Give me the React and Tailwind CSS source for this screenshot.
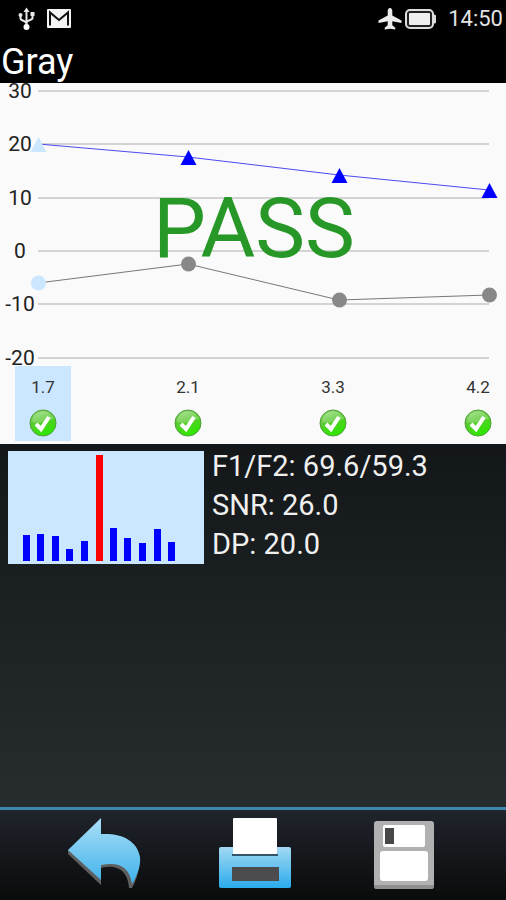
const GRID = [
  { label: '30', y: 8 },
  { label: '20', y: 61 },
  { label: '10', y: 115 },
  { label: '0', y: 168 },
  { label: '-10', y: 221 },
  { label: '-20', y: 275 },
];

const F1 = [
  { x: 38, y: 61 },
  { x: 188, y: 74 },
  { x: 339, y: 92 },
  { x: 489, y: 107 },
];

const NOISE = [
  { x: 38, y: 200 },
  { x: 188, y: 181 },
  { x: 339, y: 217 },
  { x: 489, y: 212 },
];

const FREQUENCIES = ['1.7', '2.1', '3.3', '4.2'];

const SPECTRUM = [
  { x: 15, h: 26 },
  { x: 29, h: 27 },
  { x: 44, h: 25 },
  { x: 58, h: 12 },
  { x: 73, h: 20 },
  { x: 88, h: 106, peak: true },
  { x: 102, h: 33 },
  { x: 116, h: 23 },
  { x: 131, h: 18 },
  { x: 146, h: 32 },
  { x: 160, h: 19 },
];

const toPoints = (list) => list.map((p) => `${p.x},${p.y}`).join(' ');

const UsbIcon = () => (
  <svg width="17" height="24" viewBox="0 0 17 24" fill="none" stroke="#e8e8e8" strokeWidth="2">
    <path d="M8.5 3v18" />
    <path d="M2.5 8v3.5c0 2.5 6 2 6 5" />
    <path d="M14.5 7v4c0 2.5-6 2-6 4.5" />
    <path d="M8.5 0.5l3 4.5h-6z" fill="#e8e8e8" stroke="none" />
    <circle cx="2.5" cy="8" r="2" fill="#e8e8e8" stroke="none" />
    <path d="M12.5 5h4v4h-4z" fill="#e8e8e8" stroke="none" />
    <circle cx="8.5" cy="20" r="3" fill="#fff" stroke="none" />
  </svg>
);

const MailIcon = () => (
  <svg width="24" height="19" viewBox="0 0 24 19">
    <rect width="24" height="19" rx="1" fill="#f4f4f4" />
    <path d="M3 16.5V3.5l9 7.500 9-7.500v13" fill="none" stroke="#111" strokeWidth="2" />
  </svg>
);

const PlaneIcon = () => (
  <svg width="24" height="22" viewBox="0 0 23 22">
    <path
      fill="#ececec"
      d="M11.5 0c1.5 0 2.3 1.5 2.300 3v4.500L23 12.500v2.500l-9.200-1.800v4l3 2.500v1.800l-5.300-.8-5.300.8v-1.800l3-2.500v-4L0 15v-2.500l9.200-5V3c0-1.500.8-3 2.300-3z"
    />
  </svg>
);

const BatteryIcon = () => (
  <svg width="31" height="20" viewBox="0 0 31 20">
    <rect x="1" y="1" width="27" height="18" rx="4" fill="#222" stroke="#dedede" strokeWidth="2" />
    <path d="M28 5.5h1.5q1.5 0 1.5 1.5v6q0 1.5-1.5 1.5H28z" fill="#dedede" />
    <rect x="4" y="4" width="21" height="12" rx="1" fill="#efefef" />
  </svg>
);

const CheckIcon = () => (
  <svg width="28" height="28" viewBox="0 0 28 28" className="block">
    <defs>
      <linearGradient id="ball" x1="0" y1="0" x2="0.4" y2="1">
        <stop offset="0" stopColor="#a2e08c" />
        <stop offset="0.45" stopColor="#5cc933" />
        <stop offset="1" stopColor="#2fe602" />
      </linearGradient>
    </defs>
    <circle cx="14" cy="14" r="13" fill="url(#ball)" stroke="#4f9f3a" strokeWidth="1" />
    <path d="M3 13C4 6 9 2.5 14 2.5S23.5 5 25 10C18 10 12 16 3 13z" fill="#fff" opacity="0.22" />
    <path d="M7 15l5 5 8-12" fill="none" stroke="#fff" strokeWidth="4" />
  </svg>
);

const BackIcon = () => (
  <svg width="74" height="74" viewBox="0 0 74 74">
    <defs>
      <linearGradient id="back" x1="0" y1="0" x2="0" y2="1">
        <stop offset="0" stopColor="#abdff7" />
        <stop offset="1" stopColor="#3fb2ea" />
      </linearGradient>
    </defs>
    <path fill="#5f5f5f" d="M1 32v4l33 31V50c14-4 27 1 28 20h3c4-7 7-16 7-26z" />
    <path
      fill="url(#back)"
      d="M1 32L34 0v16c22-1 36 7 39 23 1 9-3 19-8 27-2-16-12-23-31-19v15z"
    />
  </svg>
);

const PrintIcon = () => (
  <svg width="74" height="74" viewBox="0 0 74 74">
    <defs>
      <linearGradient id="printer" x1="0" y1="0" x2="0" y2="1">
        <stop offset="0" stopColor="#a3d9f3" />
        <stop offset="1" stopColor="#2aabec" />
      </linearGradient>
    </defs>
    <rect x="2" y="29" width="72" height="41" rx="2" fill="url(#printer)" />
    <rect x="15" y="36" width="46" height="2" fill="#33566a" />
    <rect x="16" y="0" width="44" height="36" rx="1" fill="#fff" />
    <rect x="15" y="49" width="47" height="14" fill="#4c4c4e" />
  </svg>
);

const SaveIcon = () => (
  <svg width="62" height="70" viewBox="0 0 62 70">
    <rect x="1" y="1" width="60" height="68" rx="3" fill="#b1b1b1" />
    <path d="M1 65h60v1q0 3-3 3H4q-3 0-3-3z" fill="#8f8f8f" />
    <rect x="10" y="5" width="42" height="22" rx="2" fill="#fff" />
    <rect x="12" y="8" width="9" height="16" fill="#474747" />
    <rect x="7" y="31" width="48" height="30" rx="3" fill="#fff" />
  </svg>
);

const StatusBar = () => (
  <div className="flex h-[37px] items-center pl-[18px] pr-[3px]">
    <UsbIcon />
    <span className="ml-3">
      <MailIcon />
    </span>
    <div className="ml-auto flex items-center">
      <PlaneIcon />
      <span className="ml-[3px]">
        <BatteryIcon />
      </span>
      <span className="ml-3 text-[22px] leading-6 text-[#e4e4e4]">14:50</span>
    </div>
  </div>
);

const Chart = () => (
  <section className="bg-[#fafafa] pb-[3px]">
    <svg viewBox="0 0 506 283" className="block h-auto w-full" fontFamily="Roboto, sans-serif">
      {GRID.map((line) => (
        <g key={line.label}>
          <path d={`M38 ${line.y}H489`} stroke="#d3d3d3" strokeWidth="2" />
          <text x="20" y={line.y + 7} fontSize="21" fill="#222" textAnchor="middle">
            {line.label}
          </text>
        </g>
      ))}
      <polyline points={toPoints(F1)} fill="none" stroke="#4a4af0" />
      <polyline points={toPoints(NOISE)} fill="none" stroke="#777" />
      {F1.map((p, i) => (
        <path
          key={p.x}
          d={`M${p.x + 0.5} ${p.y - 7}l8 15h-16z`}
          fill={i === 0 ? '#cbe6ff' : '#0000ff'}
        />
      ))}
      {NOISE.map((p, i) => (
        <circle
          key={p.x}
          cx={p.x + 0.5}
          cy={p.y}
          r="7.5"
          fill={i === 0 ? '#cbe6ff' : '#888'}
        />
      ))}
      <text x="254" y="174" fontSize="84" fill="#279827" textAnchor="middle">
        PASS
      </text>
    </svg>
    <div className="flex justify-between pl-[15px]">
      {FREQUENCIES.map((freq, i) => (
        <button
          key={freq}
          type="button"
          className={`flex w-14 flex-col items-center gap-3 pb-1 pt-[11px] ${i === 0 ? 'bg-[#cbe6ff]' : ''}`}
        >
          <span className="text-[17px] leading-5 text-[#333]">{freq}</span>
          <CheckIcon />
        </button>
      ))}
    </div>
  </section>
);

const Details = () => (
  <section className="flex flex-1 items-start gap-2 bg-linear-to-b from-[#13171a] to-[#272d2f] pl-2 pt-[7px]">
    <svg width="196" height="113" viewBox="0 0 196 113" className="block shrink-0 bg-[#cbe6ff]">
      {SPECTRUM.map((bar) => (
        <rect
          key={bar.x}
          x={bar.x}
          y={110 - bar.h}
          width="7"
          height={bar.h}
          fill={bar.peak ? '#ff0000' : '#0000ff'}
        />
      ))}
    </svg>
    <div className="-mt-1 text-[29px] leading-[39px] text-[#f0f0f0]">
      <p>F1/F2: 69.6/59.3</p>
      <p>SNR: 26.0</p>
      <p>DP: 20.0</p>
    </div>
  </section>
);

const Toolbar = () => (
  <footer className="grid h-[93px] grid-cols-3 place-items-center border-t-[3px] border-[#3d86ad] bg-linear-to-b from-[#20242c] to-[#0a0b0b] pl-[29px] pr-[27px]">
    <button type="button" aria-label="Back">
      <BackIcon />
    </button>
    <button type="button" aria-label="Print">
      <PrintIcon />
    </button>
    <button type="button" aria-label="Save">
      <SaveIcon />
    </button>
  </footer>
);

const App = () => {
  return (
    <div className="flex min-h-screen flex-col bg-black font-[Roboto,sans-serif]">
      <StatusBar />
      <h1 className="h-[46px] pl-px pt-1 text-[36px] leading-[42px] text-white">Gray</h1>
      <Chart />
      <Details />
      <Toolbar />
    </div>
  );
};

export default App;
